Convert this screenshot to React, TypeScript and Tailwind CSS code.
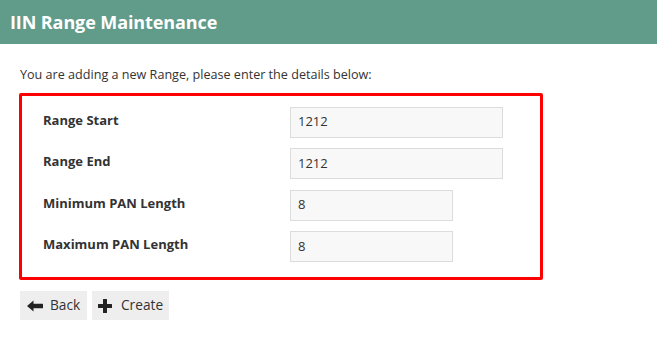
import React from "react";

const rows = [
  { label: "Range Start", value: "1212", w: "w-[213px]" },
  { label: "Range End", value: "1212", w: "w-[213px]" },
  { label: "Minimum PAN Length", value: "8", w: "w-[163px]" },
  { label: "Maximum PAN Length", value: "8", w: "w-[163px]" },
];

function ArrowLeft() {
  return (
    <svg width="16" height="12" viewBox="0 0 16 12" className="text-[#222]">
      <path d="M0 6 L6.5 0.5 L6.5 3.8 L15.5 3.8 Q16 3.8 16 4.3 L16 7.7 Q16 8.2 15.5 8.2 L6.5 8.2 L6.5 11.5 Z" fill="currentColor" />
    </svg>
  );
}

function Plus() {
  return (
    <svg width="14" height="14" viewBox="0 0 14 14" className="text-[#222]">
      <path d="M5 0.5 Q5 0 5.5 0 L8.5 0 Q9 0 9 0.5 L9 5 L13.5 5 Q14 5 14 5.5 L14 8.5 Q14 9 13.5 9 L9 9 L9 13.5 Q9 14 8.5 14 L5.5 14 Q5 14 5 13.5 L5 9 L0.5 9 Q0 9 0 8.5 L0 5.5 Q0 5 0.5 5 L5 5 Z" fill="currentColor" />
    </svg>
  );
}

export default function App() {
  return (
    <div className="w-[657px] h-[340px] bg-white text-[#333] font-['Open_Sans',sans-serif]">
      <div className="h-[44px] bg-[#619b8a] flex items-center px-[10px]">
        <h1 className="text-white text-[18px] font-bold leading-none tracking-[-0.1px]">IIN Range Maintenance</h1>
      </div>
      <div className="px-[19px]">
        <p className="text-[12.6px] mt-[22px] ml-[1px] leading-[18px]">
          You are adding a new Range, please enter the details below:
        </p>
        <div className="mt-[9px] w-[524px] h-[187px] border-[3px] border-[#ff0000] rounded-[2px] pl-[21px] pt-[11px] flex flex-col gap-[11.5px]">
          {rows.map((r) => (
            <div key={r.label} className="flex items-center h-[30px]">
              <div className="w-[247px] text-[13px] font-bold -mt-[3px]">{r.label}</div>
              <div
                className={`${r.w} h-[31px] bg-[#f8f8f8] border border-[#dcdcdc] flex items-center pl-[7px] text-[13px]`}
              >
                {r.value}
              </div>
            </div>
          ))}
        </div>
        <div className="flex gap-[5px] mt-[11px] ml-[1px]">
          <button className="w-[67px] h-[29px] bg-[#eeeeee] flex items-center gap-[7px] pl-[7px] text-[13.7px] text-[#333]">
            <ArrowLeft />
            <span>Back</span>
          </button>
          <button className="w-[77px] h-[29px] bg-[#eeeeee] flex items-center gap-[9px] pl-[6px] text-[13.7px] text-[#333]">
            <Plus />
            <span>Create</span>
          </button>
        </div>
      </div>
    </div>
  );
}
